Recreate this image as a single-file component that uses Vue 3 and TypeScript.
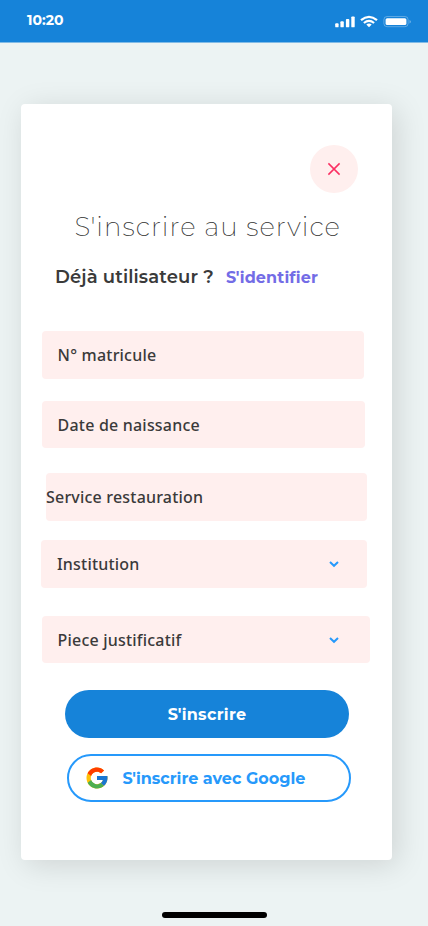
<script setup lang="ts">
interface Field {
  id: string
  label: string
  select: boolean
}

const fields: Field[] = [
  { id: 'matricule', label: 'N° matricule', select: false },
  { id: 'naissance', label: 'Date de naissance', select: false },
  { id: 'service', label: 'Service restauration', select: false },
  { id: 'institution', label: 'Institution', select: true },
  { id: 'piece', label: 'Piece justificatif', select: true },
]
</script>

<template>
  <div class="screen">
    <header class="status">
      <span class="time">10:20</span>
      <svg class="indicators" width="77" height="14" viewBox="0 0 77 14" fill="#fff">
        <rect x="0.2" y="8.3" width="3.4" height="4" rx="0.9" />
        <rect x="5.4" y="6.3" width="3.4" height="6" rx="0.9" />
        <rect x="10.9" y="4" width="3.4" height="8.3" rx="0.9" />
        <rect x="16.3" y="1.4" width="3.4" height="10.9" rx="0.9" />
        <g fill="none" stroke="#fff" stroke-width="2.2">
          <path d="M26 5.2Q34 -1.6 42 5.2" />
          <path d="M28.9 8Q34 3.8 39.1 8" />
        </g>
        <path d="M31.3 9.6Q34 7.5 36.7 9.6L34 12.3Z" />
        <rect x="48.9" y="1.5" width="24.2" height="10.2" rx="3.2" fill="none" stroke="#fff" stroke-opacity="0.3" />
        <rect x="50.6" y="3.2" width="20.8" height="6.9" rx="1.6" />
        <path d="M74.6 5v3.4q1.1-.5 1.1-1.7T74.6 5Z" fill-opacity="0.5" />
      </svg>
    </header>

    <main class="card">
      <button class="close" type="button" aria-label="Fermer">
        <svg width="14" height="14" viewBox="0 0 14 14">
          <path d="M1.4 1.4l11.2 11.2M12.6 1.4L1.4 12.6" fill="none" stroke="#fb2f62" stroke-width="1.5" />
        </svg>
      </button>

      <h1 class="title">S'inscrire au service</h1>

      <p class="login">
        <span class="question">Déjà utilisateur ?</span>
        <a class="link">S'identifier</a>
      </p>

      <form class="form">
        <div v-for="field in fields" :key="field.id" class="field" :class="field.id">
          <span class="label">{{ field.label }}</span>
          <svg v-if="field.select" class="chevron" width="10" height="8" viewBox="0 0 10 8">
            <path d="M1 2l4 3.8L9 2" fill="none" stroke="#2699fb" stroke-width="2" />
          </svg>
        </div>

        <button class="submit" type="button"><span>S'inscrire</span></button>

        <button class="google" type="button">
          <svg width="22" height="22" viewBox="1 1 46 46">
            <path fill="#ffc107" d="M46 20H24v8.4h12.4C34.6 33.5 29.7 37 24 37c-7.2 0-13-5.8-13-13s5.8-13 13-13c3.3 0 6.3 1.25 8.6 3.3l6.2-6.2C34.9 4.5 29.7 2 24 2 11.85 2 2 11.85 2 24s9.85 22 22 22 22-9.85 22-22c0-1.4-.1-2.7-.3-4Z" />
            <path fill="#ff3d00" d="M4.3 14.3l7.3 5.3C13.5 14.6 18.3 11 24 11c3.3 0 6.3 1.25 8.6 3.3l6.2-6.2C34.9 4.5 29.7 2 24 2 15.4 2 8 6.9 4.3 14.3Z" />
            <path fill="#4caf50" d="M24 46c5.6 0 10.7-2.1 14.6-5.6l-6.8-5.7A13 13 0 0 1 11.7 28.4l-7.2 5.5C8.2 41 15.6 46 24 46Z" />
            <path fill="#1976d2" d="M45.7 20H24v8.4h12.4a13 13 0 0 1-4.5 6.3l6.7 5.7C38.1 40.8 46 35 46 24c0-1.4-.1-2.7-.3-4Z" />
          </svg>
          <span>S'inscrire avec Google</span>
        </button>
      </form>
    </main>

    <div class="home-bar"></div>
  </div>
</template>

<style>
body {
  margin: 0;
}
</style>

<style scoped>
.screen {
  box-sizing: border-box;
  display: flex;
  flex-direction: column;
  width: 428px;
  height: 926px;
  overflow: hidden;
  background: #ecf3f3;
  font-family: Montserrat, Inter, sans-serif;
  color: #3a3a3a;
}

.status {
  box-sizing: border-box;
  display: flex;
  justify-content: space-between;
  align-items: flex-start;
  height: 42px;
  padding: 12px 16px 0 27px;
  background: #1683d9;
  box-shadow: 0 1px 0 rgba(22, 131, 217, 0.5);
  color: #fff;
}

.time {
  font-size: 14px;
  font-weight: 700;
  line-height: 17px;
}

.indicators {
  margin-top: 3px;
}

.card {
  box-sizing: border-box;
  display: flex;
  flex-direction: column;
  width: 371px;
  height: 756px;
  margin: 62px 0 0 21px;
  padding: 41px 0 0 20px;
  border-radius: 4px;
  background: #fff;
  box-shadow: 5px 5px 30px rgba(0, 0, 0, 0.13);
}

button {
  padding: 0;
  border: 0;
  font-family: inherit;
}

.close {
  display: flex;
  align-items: center;
  justify-content: center;
  align-self: flex-end;
  width: 48px;
  height: 48px;
  margin-right: 33.6px;
  border-radius: 50%;
  background: #ffefee;
}

.title {
  margin: 16px 0 0 33.5px;
  color: #303030;
  font-size: 26px;
  font-weight: 200;
  line-height: 36px;
  letter-spacing: 1.02px;
  white-space: nowrap;
}

.login {
  display: flex;
  align-items: baseline;
  margin: 19px 0 0 14px;
  line-height: 26px;
  white-space: nowrap;
}

.question {
  width: 171px;
  font-size: 18px;
  font-weight: 600;
  letter-spacing: 0.12px;
}

.link {
  color: #736ce6;
  font-size: 16px;
  font-weight: 700;
  letter-spacing: 0.14px;
}

.form {
  display: flex;
  flex-direction: column;
  margin-top: 40px;
}

.field {
  box-sizing: border-box;
  display: flex;
  align-items: center;
  justify-content: space-between;
  height: 47.7px;
  padding-left: 16px;
  border-radius: 4px;
  background: #ffefee;
  font-family: "Noto Sans", sans-serif;
  font-size: 16px;
  font-weight: 500;
  letter-spacing: 0.2px;
}

.matricule {
  width: 322px;
  margin-left: 0.6px;
}

.naissance {
  width: 323px;
  margin: 22px 0 0 0.6px;
}

.service {
  width: 321px;
  margin: 25px 0 0 5px;
  padding-left: 0;
}

.institution {
  width: 326px;
  margin-top: 19px;
  padding-right: 28px;
}

.piece {
  width: 328px;
  margin: 28px 0 0 0.6px;
  padding-right: 31px;
}

.submit,
.google {
  box-sizing: border-box;
  display: flex;
  align-items: center;
  width: 284px;
  height: 48px;
  border-radius: 24px;
  font-size: 16px;
  white-space: nowrap;
}

.submit {
  justify-content: center;
  margin: 27px 0 0 24px;
  background: #1683d9;
  color: #fff;
  font-weight: 700;
  letter-spacing: 0.3px;
}

.google {
  gap: 14.5px;
  margin: 16px 0 0 26px;
  padding-left: 17px;
  border: 2px solid #2699fb;
  background: #fff;
  color: #2699fb;
  font-weight: 700;
}

.home-bar {
  width: 105px;
  height: 6px;
  margin: 52px 0 0 162px;
  border-radius: 3px;
  background: #000;
}
</style>
